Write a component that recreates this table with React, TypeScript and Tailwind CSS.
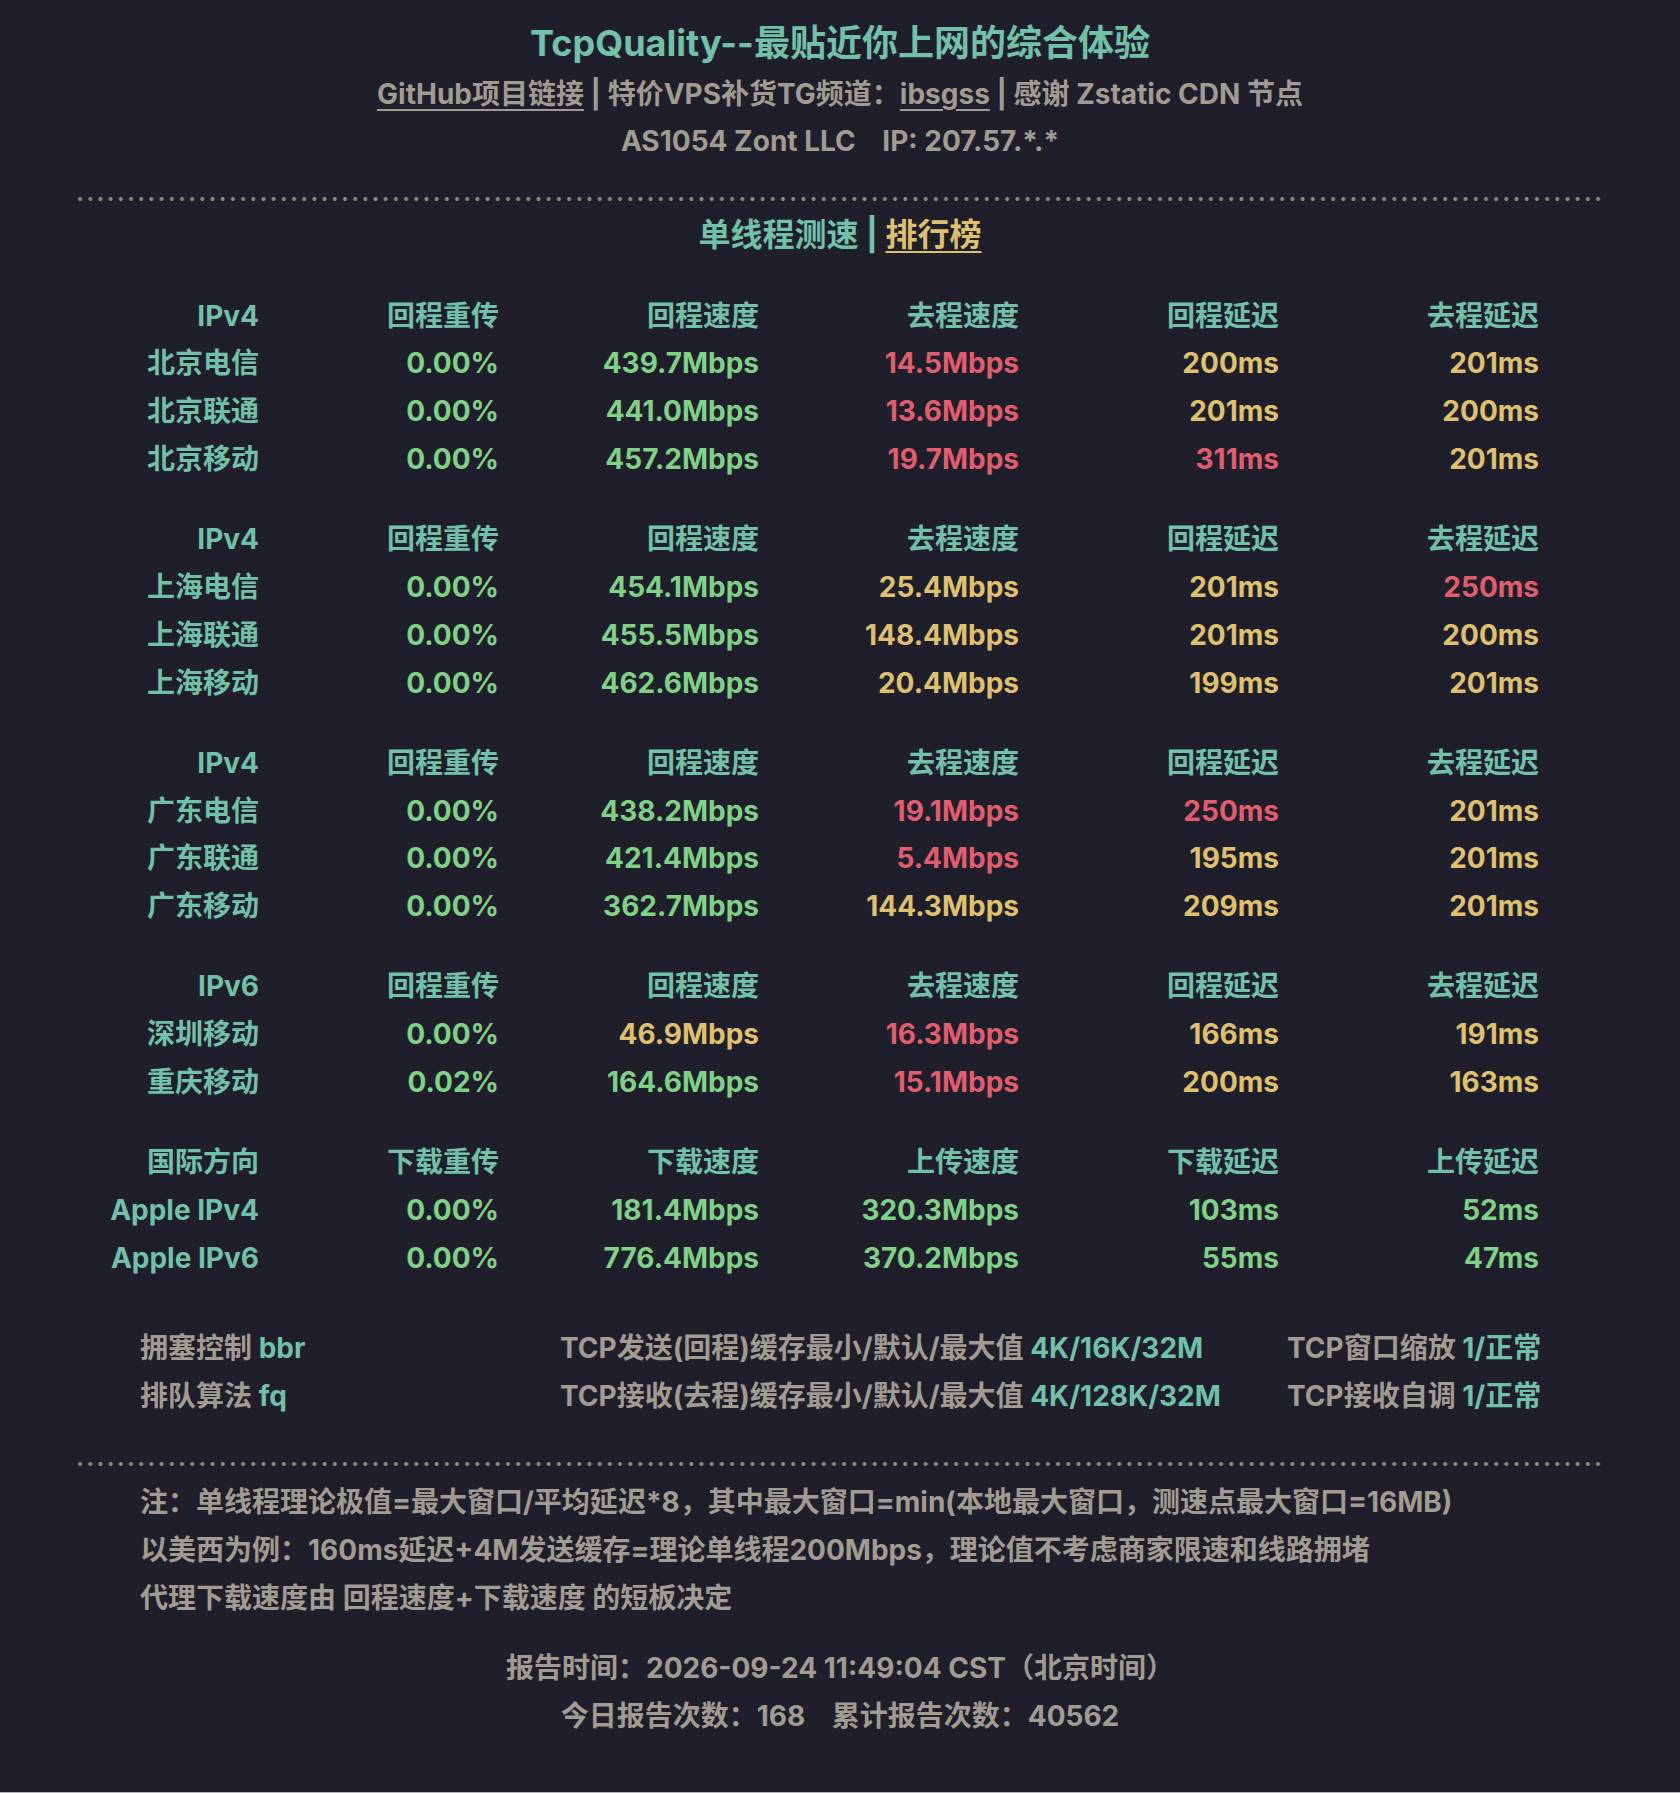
import React from "react";

type C = "g" | "r" | "y" | "t";
const colorClass: Record<C, string> = {
  g: "text-[#80d088]",
  r: "text-[#e05d6e]",
  y: "text-[#dfc06f]",
  t: "text-[#72c0a8]",
};

type Row = [string, string, [string, C], [string, C], [string, C], [string, C]];
type Group = { header: string[]; rows: Row[] };

const H4 = ["IPv4", "回程重传", "回程速度", "去程速度", "回程延迟", "去程延迟"];
const H6 = ["IPv6", "回程重传", "回程速度", "去程速度", "回程延迟", "去程延迟"];

const groups: Group[] = [
  {
    header: H4,
    rows: [
      ["北京电信", "0.00%", ["439.7Mbps", "g"], ["14.5Mbps", "r"], ["200ms", "y"], ["201ms", "y"]],
      ["北京联通", "0.00%", ["441.0Mbps", "g"], ["13.6Mbps", "r"], ["201ms", "y"], ["200ms", "y"]],
      ["北京移动", "0.00%", ["457.2Mbps", "g"], ["19.7Mbps", "r"], ["311ms", "r"], ["201ms", "y"]],
    ],
  },
  {
    header: H4,
    rows: [
      ["上海电信", "0.00%", ["454.1Mbps", "g"], ["25.4Mbps", "y"], ["201ms", "y"], ["250ms", "r"]],
      ["上海联通", "0.00%", ["455.5Mbps", "g"], ["148.4Mbps", "y"], ["201ms", "y"], ["200ms", "y"]],
      ["上海移动", "0.00%", ["462.6Mbps", "g"], ["20.4Mbps", "y"], ["199ms", "y"], ["201ms", "y"]],
    ],
  },
  {
    header: H4,
    rows: [
      ["广东电信", "0.00%", ["438.2Mbps", "g"], ["19.1Mbps", "r"], ["250ms", "r"], ["201ms", "y"]],
      ["广东联通", "0.00%", ["421.4Mbps", "g"], ["5.4Mbps", "r"], ["195ms", "y"], ["201ms", "y"]],
      ["广东移动", "0.00%", ["362.7Mbps", "g"], ["144.3Mbps", "y"], ["209ms", "y"], ["201ms", "y"]],
    ],
  },
  {
    header: H6,
    rows: [
      ["深圳移动", "0.00%", ["46.9Mbps", "y"], ["16.3Mbps", "r"], ["166ms", "y"], ["191ms", "y"]],
      ["重庆移动", "0.02%", ["164.6Mbps", "g"], ["15.1Mbps", "r"], ["200ms", "y"], ["163ms", "y"]],
    ],
  },
  {
    header: ["国际方向", "下载重传", "下载速度", "上传速度", "下载延迟", "上传延迟"],
    rows: [
      ["Apple IPv4", "0.00%", ["181.4Mbps", "g"], ["320.3Mbps", "g"], ["103ms", "g"], ["52ms", "g"]],
      ["Apple IPv6", "0.00%", ["776.4Mbps", "g"], ["370.2Mbps", "g"], ["55ms", "g"], ["47ms", "g"]],
    ],
  },
];

const gridCols = "grid grid-cols-[181px_240px_260px_260px_260px_260px]";

function Dots({ className = "" }: { className?: string }) {
  return (
    <div
      className={
        "h-[4px] w-[1530px] -ml-[3px] bg-[radial-gradient(circle,#8d887d_1.7px,transparent_2.2px)] bg-[length:10.2px_4px] bg-repeat-x " +
        className
      }
    />
  );
}

export default function App() {
  return (
    <div className="min-h-[1793px] bg-[#1f1e2b] border-b border-[#b4b4b4] font-['Inter','Noto_Sans_CJK_SC',sans-serif] font-bold text-[28px] text-[#a19c91]">
      <div className="mx-auto w-[1524px] pt-[19px] h-[1792px]">
        <div className="text-center text-[36px] leading-[48px] text-[#72c0a8]">
          TcpQuality--最贴近你上网的综合体验
        </div>
        <div className="mt-[4px] text-center leading-[47px] whitespace-pre">
          <span className="underline decoration-2 underline-offset-[5px]">GitHub项目链接</span>
          {" | "}特价VPS补货TG频道：
          <span className="underline decoration-2 underline-offset-[5px]">ibsgss</span>
          {" | "}感谢 Zstatic CDN 节点
        </div>
        <div className="text-center leading-[47px] whitespace-pre">{"AS1054 Zont LLC    IP: 207.57.*.*"}</div>

        <Dots className="mt-[32.3px]" />

        <div className="mt-[10px] text-center text-[32px] leading-[48px] text-[#72c0a8] whitespace-pre">
          单线程测速{" | "}
          <span className="text-[#dfc06f] underline decoration-2 underline-offset-[5px]">排行榜</span>
        </div>

        <div className="mt-[32.5px] flex flex-col gap-[32.4px]">
          {groups.map((g, gi) => (
            <div key={gi} className="flex flex-col">
              <div className={gridCols + " h-[47.8px] items-center text-right text-[#72c0a8]"}>
                {g.header.map((h, i) => (
                  <div key={i}>{h}</div>
                ))}
              </div>
              {g.rows.map((r, ri) => (
                <div key={ri} className={gridCols + " h-[47.8px] items-center text-right"}>
                  <div className="text-[#72c0a8]">{r[0]}</div>
                  <div className="text-[#80d088]">{r[1]}</div>
                  {[r[2], r[3], r[4], r[5]].map(([v, c], ci) => (
                    <div key={ci} className={colorClass[c]}>
                      {v}
                    </div>
                  ))}
                </div>
              ))}
            </div>
          ))}
        </div>

        <div className="mt-[42.5px] pl-[62px] grid grid-cols-[420px_727px_1fr] leading-[48px]">
          <div>
            拥塞控制 <span className="text-[#72c0a8]">bbr</span>
          </div>
          <div>
            TCP发送(回程)缓存最小/默认/最大值 <span className="text-[#72c0a8]">4K/16K/32M</span>
          </div>
          <div>
            TCP窗口缩放 <span className="text-[#72c0a8]">1/正常</span>
          </div>
          <div>
            排队算法 <span className="text-[#72c0a8]">fq</span>
          </div>
          <div>
            TCP接收(去程)缓存最小/默认/最大值 <span className="text-[#72c0a8]">4K/128K/32M</span>
          </div>
          <div>
            TCP接收自调 <span className="text-[#72c0a8]">1/正常</span>
          </div>
        </div>

        <Dots className="mt-[42px]" />

        <div className="mt-[12px] pl-[62px] leading-[48px]">
          <div>注：单线程理论极值=最大窗口/平均延迟*8，其中最大窗口=min(本地最大窗口，测速点最大窗口=16MB)</div>
          <div>以美西为例：160ms延迟+4M发送缓存=理论单线程200Mbps，理论值不考虑商家限速和线路拥堵</div>
          <div>代理下载速度由 回程速度+下载速度 的短板决定</div>
        </div>

        <div className="mt-[21.5px] text-center leading-[48px] whitespace-pre">
          <div>报告时间：2026-09-24 11:49:04 CST（北京时间）</div>
          <div>{"今日报告次数：168    累计报告次数：40562"}</div>
        </div>
      </div>
    </div>
  );
}
